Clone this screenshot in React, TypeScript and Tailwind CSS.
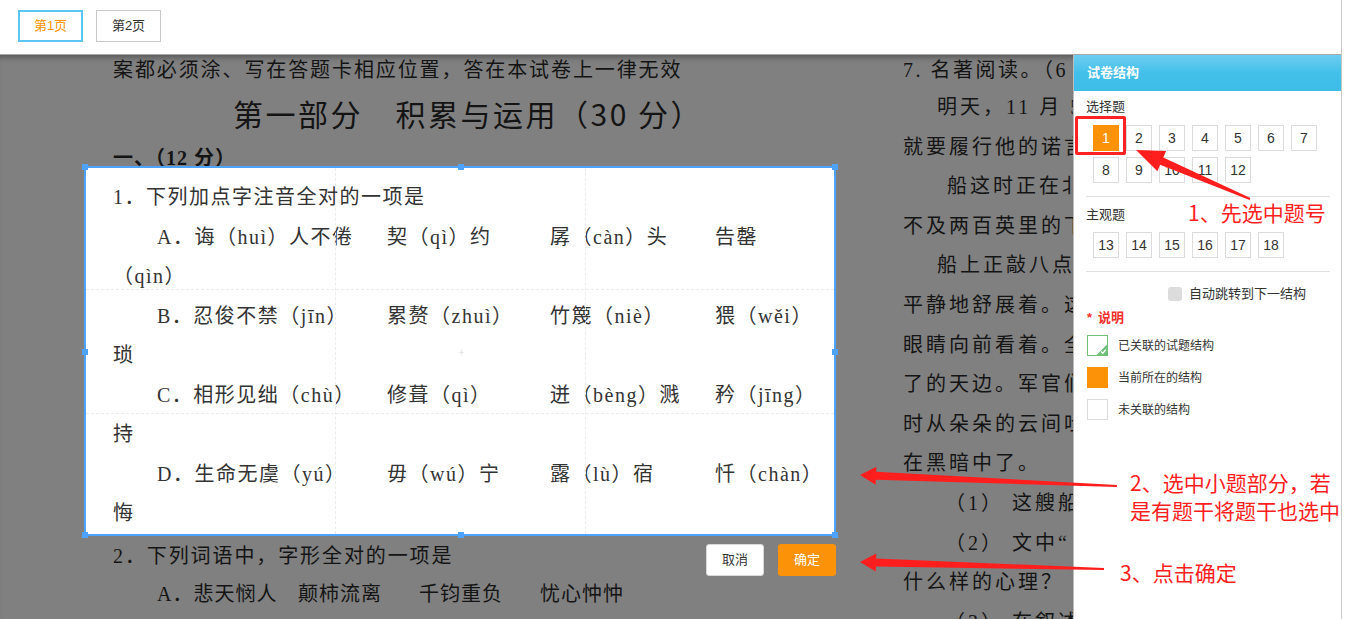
import React from "react";

const docFont = { fontFamily: '"Liberation Serif", "Noto Sans CJK SC", serif' };
const uiFont = { fontFamily: '"Liberation Sans", "Noto Sans CJK SC", sans-serif' };
const redFont = { fontFamily: '"Noto Sans CJK SC", sans-serif' };

type Pt = [number, number];

// tapered arrow polygon: tip, tail, head length/width, shaft width at neck and tail
const arrow = (tip: Pt, tail: Pt, hl: number, hw: number, nw: number, tw: number) => {
  const dx = tip[0] - tail[0];
  const dy = tip[1] - tail[1];
  const len = Math.hypot(dx, dy);
  const ux = dx / len;
  const uy = dy / len;
  const nx = -uy;
  const ny = ux;
  const bx = tip[0] - ux * hl;
  const by = tip[1] - uy * hl;
  const p = (x: number, y: number, w: number, s: number) => `${x + nx * w * s / 2},${y + ny * w * s / 2}`;
  return [
    `${tip[0]},${tip[1]}`,
    p(bx, by, hw, 1),
    p(bx, by, nw, 1),
    p(tail[0], tail[1], tw, 1),
    p(tail[0], tail[1], tw, -1),
    p(bx, by, nw, -1),
    p(bx, by, hw, -1),
  ].join(" ");
};

const options = [
  { row: ["A．诲（huì）人不倦", "契（qì）约", "孱（càn）头", "告罄"], rest: "（qìn）" },
  { row: ["B．忍俊不禁（jīn）", "累赘（zhuì）", "竹篾（niè）", "猥（wěi）"], rest: "琐" },
  { row: ["C．相形见绌（chù）", "修葺（qì）", "迸（bèng）溅", "矜（jīng）"], rest: "持" },
  { row: ["D．生命无虞（yú）", "毋（wú）宁", "露（lù）宿", "忏（chàn）"], rest: "悔" },
];

const rightLines: { text: string; indent: string }[] = [
  { text: "明天，11 月 5 日，十点钟，", indent: "pl-[34px]" },
  { text: "就要履行他的诺言了", indent: "" },
  { text: "船这时正在北纬", indent: "pl-[44px]" },
  { text: "不及两百英里的下方", indent: "" },
  { text: "船上正敲八点钟", indent: "pl-[34px]" },
  { text: "平静地舒展着。这时", indent: "" },
  { text: "眼睛向前看着。全体", indent: "" },
  { text: "了的天边。军官们", indent: "" },
  { text: "时从朵朵的云间吐出", indent: "" },
  { text: "在黑暗中了。", indent: "" },
  { text: "（1） 这艘船", indent: "pl-[42px]" },
  { text: "（2） 文中“", indent: "pl-[42px]" },
  { text: "什么样的心理？（", indent: "" },
  { text: "（3） 在叙述", indent: "pl-[42px]" },
];

const NumBox = ({ n, active }: { n: number; active?: boolean }) => (
  <div
    className={`w-[26px] h-[26px] flex items-center justify-center text-[14px] ${
      active ? "bg-[#fb9207] text-white" : "border border-[#dcdcdc] text-[#333]"
    }`}
  >
    {n}
  </div>
);

const Handle = ({ cls }: { cls: string }) => (
  <div className={`absolute w-[6px] h-[6px] bg-[#4da3ff] ${cls}`} />
);

export default function App() {
  return (
    <div className="relative w-[1345px] h-[619px] overflow-hidden bg-white flex" style={uiFont}>
      <div className="w-[1341px] h-full flex flex-col">
        {/* top tabs */}
        <div className="h-[55px] shrink-0 border-b border-[#a9a9a9] flex items-start pt-[10px] pl-[18px] gap-[13px]">
          <button className="w-[65px] h-[32px] border-2 border-[#5cc6f2] text-[#ff9500] text-[13px]">第1页</button>
          <button className="w-[65px] h-[32px] border border-[#c8c8c8] text-[#333] text-[13px]">第2页</button>
        </div>

        <div className="flex flex-1 min-h-0">
          {/* document */}
          <div className="relative flex-1 overflow-hidden bg-[#808080] shadow-[inset_0_7px_6px_-5px_rgba(0,0,0,0.35)] whitespace-nowrap text-[#141414]" style={docFont}>
            <div className="flex">
              {/* left column */}
              <div className="w-[819px] ml-[84px] pl-[29px] shrink-0">
                <div className="h-[30px] leading-[30px] text-[20px] tracking-[1.9px]">案都必须涂、写在答题卡相应位置，答在本试卷上一律无效</div>
                <div className="mt-[6px] h-[44px] leading-[44px] text-[30px] pl-[120px] tracking-[2.5px]" style={redFont}>
                  第一部分　积累与运用（30 分）
                </div>
                <div className="mt-[8px] h-[30px] leading-[30px] text-[20px] font-bold tracking-[1px]">一、（12 分）</div>

                {/* selection box */}
                <div className="relative -mt-[7px] -ml-[29px] w-[752px] h-[370px] bg-white border-2 border-[#4da3ff] text-[#333] text-[20px] tracking-[1.5px] pt-[10px] pl-[27px]">
                  <div className="absolute left-[249px] top-0 bottom-0 border-l border-dashed border-[#ececec]" />
                  <div className="absolute left-[499px] top-0 bottom-0 border-l border-dashed border-[#ececec]" />
                  <div className="absolute top-[121px] left-0 right-0 border-t border-dashed border-[#ececec]" />
                  <div className="absolute top-[245px] left-0 right-0 border-t border-dashed border-[#ececec]" />
                  <div className="absolute left-[372px] top-[179px] text-[12px] leading-none text-[#ddd]">+</div>
                  <Handle cls="-left-[4px] -top-[4px]" />
                  <Handle cls="left-[372px] -top-[4px]" />
                  <Handle cls="-right-[4px] -top-[4px]" />
                  <Handle cls="-left-[4px] top-[181px]" />
                  <Handle cls="-right-[4px] top-[181px]" />
                  <Handle cls="-left-[4px] -bottom-[4px]" />
                  <Handle cls="left-[372px] -bottom-[4px]" />
                  <Handle cls="-right-[4px] -bottom-[4px]" />

                  <div className="leading-[39.5px]">
                    <div>1．下列加点字注音全对的一项是</div>
                    {options.map((o) => (
                      <React.Fragment key={o.rest}>
                        <div className="grid grid-cols-[230px_163px_165px_auto] pl-[44px]">
                          {o.row.map((c) => (
                            <span key={c}>{c}</span>
                          ))}
                        </div>
                        <div>{o.rest}</div>
                      </React.Fragment>
                    ))}
                  </div>
                </div>

                <div className="mt-[8px] w-[723px] flex justify-between items-start">
                  <div className="leading-[24px] text-[20px] tracking-[1.9px]">2．下列词语中，字形全对的一项是</div>
                  <div className="flex gap-[14px]" style={uiFont}>
                    <button className="w-[58px] h-[32px] bg-white border border-[#d9d9d9] rounded-[3px] text-[13px] text-[#333] tracking-normal">取消</button>
                    <button className="w-[58px] h-[32px] bg-[#fb9207] rounded-[3px] text-[13px] text-white tracking-normal">确定</button>
                  </div>
                </div>
                <div className="mt-[3px] h-[30px] leading-[30px] text-[20px] tracking-[1px] pl-[44px] grid grid-cols-[141px_121px_121px_auto]">
                  <span>A．悲天悯人</span>
                  <span>颠柿流离</span>
                  <span>千钧重负</span>
                  <span>忧心忡忡</span>
                </div>
              </div>

              {/* right column */}
              <div className="shrink-0 text-[20px] tracking-[3px]">
                <div className="h-[30px] leading-[30px] tracking-[2.5px]">7. 名著阅读。（6 分）</div>
                <div className="mt-[3px] leading-[39.6px]">
                  {rightLines.map((l, i) => (
                    <div key={i} className={l.indent}>
                      {l.text}
                    </div>
                  ))}
                </div>
              </div>
            </div>
          </div>

          {/* structure panel */}
          <div className="relative w-[268px] shrink-0 bg-white border-l border-[#bdbdbd] flex flex-col">
            <div className="h-[36px] bg-gradient-to-b from-[#6ccdf0] via-[#42c0ea] to-[#3dbde8] text-white text-[13px] font-bold leading-[36px] pl-[13px]">
              试卷结构
            </div>
            <div className="pl-[12px] pr-[11px]">
              <div className="mt-[6px] leading-[20px] text-[13px] text-[#333]">选择题</div>
              <div className="mt-[8px] ml-[7px] grid grid-cols-[repeat(7,26px)] gap-x-[7px] gap-y-[6px]">
                {Array.from({ length: 12 }, (_, i) => (
                  <NumBox key={i} n={i + 1} active={i === 0} />
                ))}
              </div>
              <div className="mt-[13px] border-t border-[#e0e0e0]" />
              <div className="mt-[8px] leading-[20px] text-[13px] text-[#333]">主观题</div>
              <div className="mt-[7px] ml-[7px] grid grid-cols-[repeat(7,26px)] gap-x-[7px]">
                {Array.from({ length: 6 }, (_, i) => (
                  <NumBox key={i} n={i + 13} />
                ))}
              </div>
              <div className="mt-[13px] border-t border-[#e0e0e0]" />
              <div className="mt-[14px] flex items-center pl-[82px] gap-[7px] h-[16px]">
                <div className="w-[14px] h-[14px] rounded-[3px] bg-[#dcdcdc]" />
                <span className="text-[13px] text-[#333]">自动跳转到下一结构</span>
              </div>
              <div className="mt-[6px] pl-[1px] leading-[20px] text-[13px] font-bold text-[#f2302c]">
                <span className="mr-[6px]">*</span>说明
              </div>
              <div className="mt-[7px] pl-[1px] flex flex-col gap-[11px] text-[12px] text-[#333]">
                <div className="flex items-center gap-[10px]">
                  <svg width="21" height="21" viewBox="0 0 21 21">
                    <rect x="0.5" y="0.5" width="20" height="20" fill="#fff" stroke="#72c17a" />
                    <path d="M20.5 9 L20.5 20.5 L9 20.5 Z" fill="#72c17a" />
                    <path d="M14 16.5 L15.8 18.2 L18.8 14.6" fill="none" stroke="#fff" strokeWidth="1.3" />
                  </svg>
                  <span>已关联的试题结构</span>
                </div>
                <div className="flex items-center gap-[10px]">
                  <div className="w-[21px] h-[21px] bg-[#fb9207]" />
                  <span>当前所在的结构</span>
                </div>
                <div className="flex items-center gap-[10px]">
                  <div className="w-[21px] h-[21px] border border-[#dcdcdc]" />
                  <span>未关联的结构</span>
                </div>
              </div>
            </div>
            {/* red highlight around question 1 */}
            <div className="absolute left-[1px] top-[61px] w-[51px] h-[39px] border-[3px] border-[#f22] rounded-[2px]" />
          </div>
        </div>
      </div>
      <div className="w-[4px] h-full border-l border-[#c8c8c8] bg-white" />

      {/* annotations */}
      <svg className="absolute inset-0 pointer-events-none" width="1345" height="619">
        <polygon points={arrow([1136, 150], [1250, 199], 28, 22, 8, 2)} fill="#ff1e1e" />
        <polygon points={arrow([860, 475], [1117, 486], 16, 18, 8, 2)} fill="#ff1e1e" />
        <polygon points={arrow([860, 562], [1104, 569], 16, 18, 8, 2)} fill="#ff1e1e" />
      </svg>
      <div className="absolute left-[1188px] top-[198px] text-[21px] leading-[29px] text-[#ff1e1e]" style={redFont}>
        1、先选中题号
      </div>
      <div className="absolute left-[1130px] top-[468px] text-[21px] leading-[28px] text-[#ff1e1e]" style={redFont}>
        <div>2、选中小题部分，若</div>
        <div>是有题干将题干也选中</div>
      </div>
      <div className="absolute left-[1120px] top-[558px] text-[21px] leading-[29px] text-[#ff1e1e]" style={redFont}>
        3、点击确定
      </div>
    </div>
  );
}
